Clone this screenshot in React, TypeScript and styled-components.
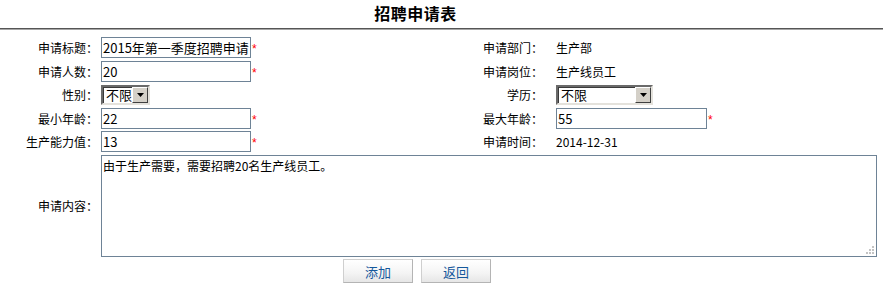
import styled, { createGlobalStyle } from "styled-components"

const GlobalStyle = createGlobalStyle`
  body {
    margin: 0;
    background: #fff;
    color: #000;
    font-family: "Noto Sans CJK SC", "Liberation Sans", sans-serif;
    font-size: 12px;
  }
`

const Page = styled.div`
  width: 889px;
`

const Title = styled.h1`
  margin: 0;
  width: 883px;
  height: 28px;
  box-sizing: content-box;
  padding-right: 0;
  border-bottom: 1px solid #555;
  box-shadow: 0 1px 0 #a6a6a6;
  font-size: 16px;
  font-weight: bold;
  line-height: 27px;
  text-align: center;
  text-indent: -52px;
  letter-spacing: 0.5px;
`

const Form = styled.div`
  display: grid;
  grid-template-columns: 101px 384px 71px 1fr;
  grid-template-rows: repeat(5, 21px) 102px 24px;
  row-gap: 2.5px;
  margin-top: 8px;
  width: 877px;
`

const Label = styled.div<{ $pad: number }>`
  display: flex;
  align-items: center;
  justify-content: flex-end;
  padding-right: ${(p) => p.$pad}px;
  white-space: nowrap;
`

const Field = styled.div<{ $span?: boolean }>`
  display: flex;
  align-items: center;
  grid-column: ${(p) => (p.$span ? "2 / 5" : "auto")};
  white-space: nowrap;
`

const TextInput = styled.input`
  width: 150px;
  height: 21px;
  box-sizing: border-box;
  border: 1px solid #6e8396;
  padding: 0 1px;
  margin: 0;
  font-family: "Noto Sans CJK SC", sans-serif;
  font-size: 13px;
  color: #000;
  outline: none;
`

const Required = styled.span`
  color: #f00;
  font-family: "Liberation Sans", sans-serif;
  font-size: 12px;
  margin-left: 1px;
  padding-top: 3px;
`

const SelectBox = styled.div<{ $width: number }>`
  width: ${(p) => p.$width}px;
  height: 20px;
  box-sizing: border-box;
  display: flex;
  align-items: stretch;
  background: #fff;
  border: 2px solid;
  border-color: #6a6a6a #e4e2dc #e4e2dc #6a6a6a;
  box-shadow: inset 1px 1px 0 #3a3a3a;
`

const SelectText = styled.span`
  flex: 1;
  padding-left: 3px;
  font-size: 13px;
  line-height: 16px;
`

const ArrowButton = styled.span`
  width: 16px;
  box-sizing: border-box;
  display: flex;
  align-items: center;
  justify-content: center;
  background: #d4d0c8;
  border: 1px solid;
  border-color: #fff #404040 #404040 #fff;
`

const Value = styled.span`
  font-size: 12px;
`

const AreaWrap = styled.div`
  position: relative;
  width: 776px;
  height: 102px;
`

const TextArea = styled.textarea`
  width: 100%;
  height: 100%;
  box-sizing: border-box;
  margin: 0;
  border: 1px solid #6e8396;
  padding: 2px 1px;
  resize: none;
  font-family: "Noto Sans CJK SC", sans-serif;
  font-size: 12px;
  line-height: 16px;
  color: #000;
  outline: none;
`

const Grip = styled.svg`
  position: absolute;
  right: 2px;
  bottom: 2px;
`

const ButtonRow = styled.div`
  grid-column: 1 / 5;
  display: flex;
  gap: 8px;
  padding-left: 343px;
`

const Button = styled.button`
  width: 70px;
  height: 24px;
  margin: 0;
  padding: 0;
  border: 1px solid #cfcfcf;
  border-right-color: #b4b4b4;
  border-bottom-color: #b4b4b4;
  background: linear-gradient(#ffffff, #f4f4f4 60%, #e6e6e6);
  color: #15589c;
  font-family: "Noto Sans CJK SC", sans-serif;
  font-size: 13px;
  cursor: pointer;
`

function Select({ width, value }: { width: number; value: string }) {
  return (
    <SelectBox $width={width}>
      <SelectText>{value}</SelectText>
      <ArrowButton>
        <svg width="7" height="4" viewBox="0 0 7 4">
          <path d="M0 0h7L3.5 4z" fill="#000" />
        </svg>
      </ArrowButton>
    </SelectBox>
  )
}

export default function App() {
  return (
    <Page>
      <GlobalStyle />
      <Title>招聘申请表</Title>
      <Form>
        <Label $pad={3}>申请标题：</Label>
        <Field>
          <TextInput defaultValue="2015年第一季度招聘申请" />
          <Required>*</Required>
        </Field>
        <Label $pad={13}>申请部门：</Label>
        <Field>
          <Value>生产部</Value>
        </Field>

        <Label $pad={3}>申请人数：</Label>
        <Field>
          <TextInput defaultValue="20" />
          <Required>*</Required>
        </Field>
        <Label $pad={13}>申请岗位：</Label>
        <Field>
          <Value>生产线员工</Value>
        </Field>

        <Label $pad={3}>性别：</Label>
        <Field>
          <Select width={49} value="不限" />
        </Field>
        <Label $pad={13}>学历：</Label>
        <Field>
          <Select width={97} value="不限" />
        </Field>

        <Label $pad={3}>最小年龄：</Label>
        <Field>
          <TextInput defaultValue="22" />
          <Required>*</Required>
        </Field>
        <Label $pad={13}>最大年龄：</Label>
        <Field>
          <TextInput defaultValue="55" style={{ width: 151 }} />
          <Required>*</Required>
        </Field>

        <Label $pad={3}>生产能力值：</Label>
        <Field>
          <TextInput defaultValue="13" />
          <Required>*</Required>
        </Field>
        <Label $pad={13}>申请时间：</Label>
        <Field>
          <Value>2014-12-31</Value>
        </Field>

        <Label $pad={3}>申请内容：</Label>
        <Field $span>
          <AreaWrap>
            <TextArea defaultValue="由于生产需要，需要招聘20名生产线员工。" />
            <Grip width="10" height="10" viewBox="0 0 10 10">
              <g fill="#c4c4c4">
                <rect x="7" y="1" width="2" height="2" />
                <rect x="4" y="4" width="2" height="2" />
                <rect x="7" y="4" width="2" height="2" />
                <rect x="1" y="7" width="2" height="2" />
                <rect x="4" y="7" width="2" height="2" />
                <rect x="7" y="7" width="2" height="2" />
              </g>
            </Grip>
          </AreaWrap>
        </Field>

        <ButtonRow>
          <Button>添加</Button>
          <Button>返回</Button>
        </ButtonRow>
      </Form>
    </Page>
  )
}
